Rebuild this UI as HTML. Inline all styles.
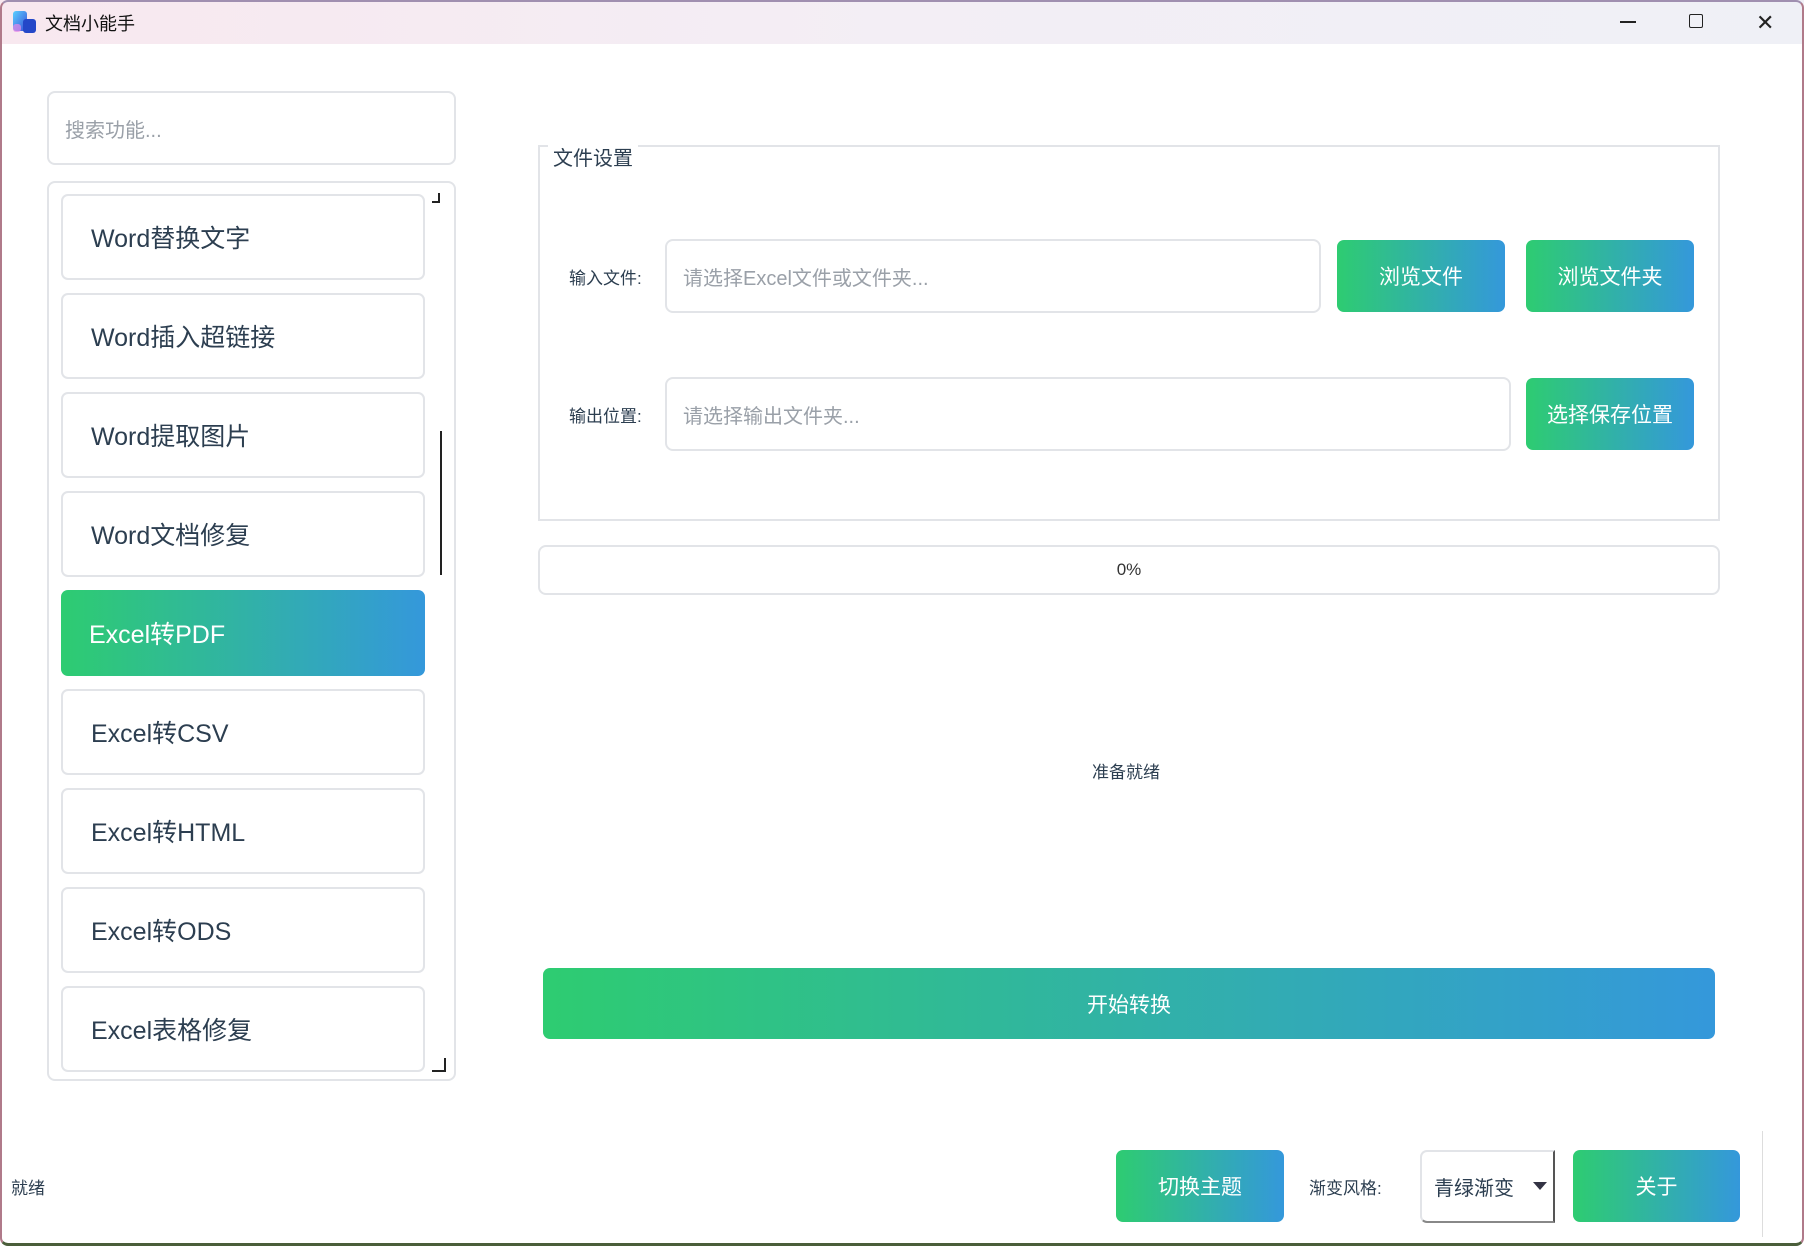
<!DOCTYPE html>
<html><head><meta charset="utf-8"><style>
*{box-sizing:border-box;margin:0;padding:0}
body{width:1804px;height:1246px;overflow:hidden;background:#fff;font-family:"Liberation Sans","Noto Sans CJK SC",sans-serif;color:#2c3e50;position:relative}
.abs{position:absolute}
.win{position:absolute;left:0;top:0;width:1804px;height:1246px;overflow:hidden;background:#fff}
.frame{position:absolute;left:0;top:0;width:1804px;height:1246px;border:2px solid #b07a8a;border-top:2px solid #a08fb0;border-bottom:3px solid #4a5e3a;border-radius:8px;pointer-events:none}
.title{position:absolute;left:0;top:0;width:1804px;height:44px;background:linear-gradient(90deg,#f8e8ef,#f3eef5 50%,#eff0f6)}
.grad{background:linear-gradient(90deg,#2ecc71,#3498db);color:#fff;border-radius:7px;display:flex;align-items:center;justify-content:center;font-size:21px}
.box{border:2px solid #e2e4e8;border-radius:8px;background:#fff}
.item{position:absolute;left:61px;width:364px;height:86px;border:2px solid #e2e4e8;border-radius:7px;display:flex;align-items:center;padding-left:28px;font-size:25px;color:#2c3e50}
.lbl{font-size:17px;color:#2c3e50}
.ph{color:#9aa0a8;font-size:20px;display:flex;align-items:center;padding-left:16px}
</style></head><body>
<div class="win">
<div class="title"></div>
<svg class="abs" style="left:12px;top:10px" width="26" height="24" viewBox="0 0 26 24"><defs><linearGradient id="g" x1="0" y1="0" x2="1" y2="1"><stop offset="0" stop-color="#5ad0ff"/><stop offset="1" stop-color="#3a4fd8"/></linearGradient></defs><rect x="1" y="1" width="14" height="20" rx="3" fill="url(#g)"/><rect x="11" y="9" width="13" height="14" rx="3" fill="#2447c8"/><rect x="1" y="14" width="8" height="8" rx="3" fill="#e888e8" opacity=".7"/></svg>
<div class="abs" style="left:45px;top:10px;font-size:18px;color:#111">文档小能手</div>
<div class="abs" style="left:1620px;top:21px;width:16px;height:1.5px;background:#222"></div>
<div class="abs" style="left:1689px;top:14px;width:14px;height:14px;border:1.5px solid #222;border-radius:2px"></div>
<div class="abs" style="left:1756px;top:10px;font-size:22px;color:#222">✕</div>

<div class="abs box ph" style="left:47px;top:91px;width:409px;height:74px">搜索功能...</div>
<div class="abs box" style="left:47px;top:181px;width:409px;height:900px"></div>
<div class="abs" style="left:432px;top:193px;width:8px;height:10px;border-right:2px solid #222;border-bottom:2px solid #222"></div>
<div class="abs" style="left:432px;top:1058px;width:14px;height:14px;border-right:2px solid #222;border-bottom:2px solid #222"></div>
<div class="abs" style="left:440px;top:431px;width:2px;height:144px;background:#222"></div>
<div class="item" style="top:194px">Word替换文字</div>
<div class="item" style="top:293px">Word插入超链接</div>
<div class="item" style="top:392px">Word提取图片</div>
<div class="item" style="top:491px">Word文档修复</div>
<div class="item grad" style="top:590px;justify-content:flex-start;padding-left:28px;font-size:25px;border:none;color:#fff">Excel转PDF</div>
<div class="item" style="top:689px">Excel转CSV</div>
<div class="item" style="top:788px">Excel转HTML</div>
<div class="item" style="top:887px">Excel转ODS</div>
<div class="item" style="top:986px">Excel表格修复</div>

<div class="abs" style="left:538px;top:145px;width:1182px;height:376px;border:2px solid #e2e4e8"></div>
<div class="abs" style="left:548px;top:142px;background:#fff;padding:0 5px;font-size:20px;color:#2c3e50">文件设置</div>
<div class="abs lbl" style="left:569px;top:264px">输入文件:</div>
<div class="abs box ph" style="left:665px;top:239px;width:656px;height:74px">请选择Excel文件或文件夹...</div>
<div class="abs grad" style="left:1337px;top:240px;width:168px;height:72px">浏览文件</div>
<div class="abs grad" style="left:1526px;top:240px;width:168px;height:72px">浏览文件夹</div>
<div class="abs lbl" style="left:569px;top:402px">输出位置:</div>
<div class="abs box ph" style="left:665px;top:377px;width:846px;height:74px">请选择输出文件夹...</div>
<div class="abs grad" style="left:1526px;top:378px;width:168px;height:72px">选择保存位置</div>

<div class="abs box" style="left:538px;top:545px;width:1182px;height:50px;display:flex;align-items:center;justify-content:center;font-size:17px;color:#333">0%</div>
<div class="abs lbl" style="left:1092px;top:758px">准备就绪</div>
<div class="abs grad" style="left:543px;top:968px;width:1172px;height:71px">开始转换</div>

<div class="abs lbl" style="left:11px;top:1174px">就绪</div>
<div class="abs grad" style="left:1116px;top:1150px;width:168px;height:72px">切换主题</div>
<div class="abs lbl" style="left:1309px;top:1174px">渐变风格:</div>
<div class="abs box" style="left:1420px;top:1150px;width:135px;height:73px;border-radius:7px 0 0 7px;border-right:2px solid #555;border-bottom:2px solid #888;display:flex;align-items:center;padding-left:12px;font-size:20px">青绿渐变<span style="position:absolute;right:6px;top:30px;border-left:7px solid transparent;border-right:7px solid transparent;border-top:8px solid #334"></span></div>
<div class="abs grad" style="left:1573px;top:1150px;width:167px;height:72px">关于</div>
<div class="abs" style="left:1762px;top:1131px;width:1px;height:106px;background:#ddd"></div>
</div>
<div class="frame"></div>
</body></html>
